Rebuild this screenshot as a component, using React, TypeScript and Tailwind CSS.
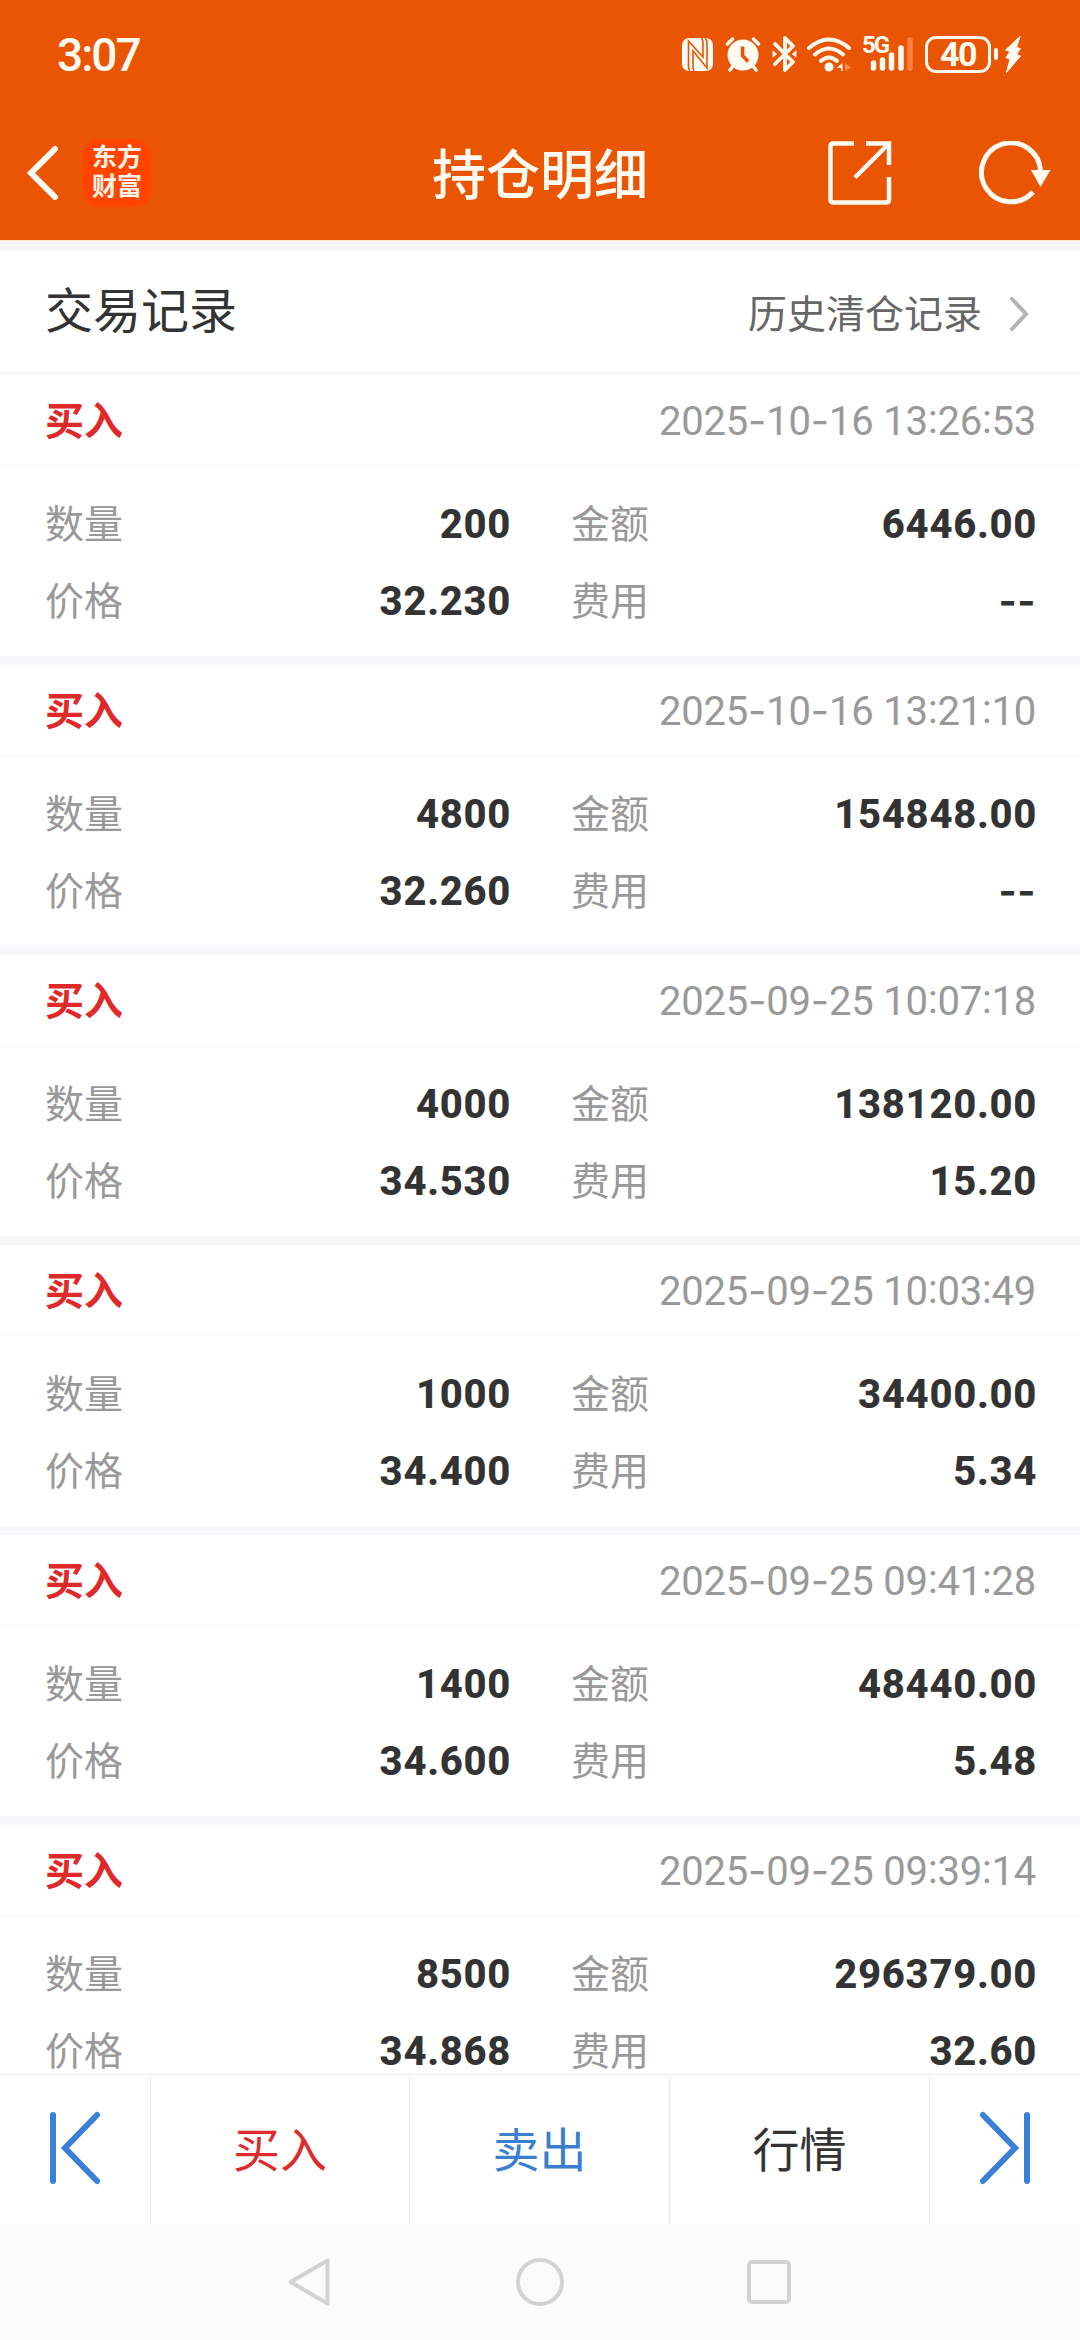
import { Fragment } from 'react'

type Trade = {
  time: string
  count: string
  amount: string
  price: string
  fee: string
}

const trades: Trade[] = [
  { time: '2025-10-16 13:26:53', count: '200', amount: '6446.00', price: '32.230', fee: '--' },
  { time: '2025-10-16 13:21:10', count: '4800', amount: '154848.00', price: '32.260', fee: '--' },
  { time: '2025-09-25 10:07:18', count: '4000', amount: '138120.00', price: '34.530', fee: '15.20' },
  { time: '2025-09-25 10:03:49', count: '1000', amount: '34400.00', price: '34.400', fee: '5.34' },
  { time: '2025-09-25 09:41:28', count: '1400', amount: '48440.00', price: '34.600', fee: '5.48' },
  { time: '2025-09-25 09:39:14', count: '8500', amount: '296379.00', price: '34.868', fee: '32.60' },
]

function StatusBar() {
  return (
    <div className="flex h-[108px] items-center pl-[57px] pr-[58px] font-['Roboto',sans-serif] text-[#fffaf2]">
      <span className="pt-px text-[46px] font-medium leading-none tracking-[-2px]">3:07</span>
      <div className="ml-auto flex items-center">
        {/* NFC */}
        <svg className="mr-3" width="31" height="33" viewBox="0 0 31 33">
          <rect width="31" height="33" rx="7" fill="currentColor" />
          <path d="M8 33Q6 31 6.500 26V3L21 19V5q0-4-1.500-5M23 0q2 2 2 6v24L11 13v15q0 4 1 5" fill="none" stroke="#ea5504" strokeWidth="1.6" />
        </svg>
        {/* alarm */}
        <svg className="mr-[11px]" width="36" height="36" viewBox="0 0 36 36" fill="none" stroke="currentColor" strokeLinecap="round">
          <circle cx="18" cy="19" r="15.5" fill="currentColor" stroke="none" />
          <path d="M2.500 8l5-5M33.500 8l-5-5M8 30l-3 4M28 30l3 4" strokeWidth="3.5" />
          <path d="M17.500 10.500v9l5.500 6" stroke="#ea5504" strokeWidth="3.5" strokeLinecap="butt" />
        </svg>
        {/* bluetooth */}
        <svg className="mr-[10px]" width="25" height="36" viewBox="0 0 25 36" fill="none" stroke="currentColor" strokeWidth="3.8" strokeLinejoin="round" strokeLinecap="round">
          <path d="M3 8l18 18-8 8V2l8 8L3 28" />
          <path d="M1 15l4 3-4 3zM24 15l-4 3 4 3z" fill="currentColor" strokeWidth="0.5" />
        </svg>
        {/* wifi */}
        <svg className="mr-3" width="44" height="35" viewBox="0 0 44 35" fill="none" stroke="currentColor" strokeWidth="4" strokeLinecap="round">
          <path d="M2 11q20-17 40 0M8 17.500q14-12 28 0M14 24q8-7 16 0" />
          <circle cx="22" cy="30" r="4.500" fill="currentColor" stroke="none" />
          <path d="M35.500 26v8H34v-3h-4.500z" fill="currentColor" stroke="none" />
          <path d="M38 26l6 4.500L38 34z" fill="#ff8c52" stroke="none" />
        </svg>
        {/* signal */}
        <div className="relative mr-[12px] h-[36px] w-[50px]">
          <span className="absolute -left-px top-0 text-[24px] font-bold leading-[18px] tracking-[-2px]">5G</span>
          <svg width="50" height="36" viewBox="0 0 50 36" fill="none" stroke="currentColor" strokeWidth="5.5" strokeLinecap="round">
            <path d="M10.500 27v5M19.500 24v8M28.500 19v13M38 12v20" />
            <path d="M47 4v28" stroke="#ff8040" />
          </svg>
        </div>
        {/* battery */}
        <div className="flex h-[37px] w-[66px] items-center justify-center rounded-[11px] border-[3px] border-[#fffaf2]">
          <span className="text-[34px] font-bold leading-none tracking-[-1.5px]">40</span>
        </div>
        <div className="ml-[3px] mr-[7px] h-3 w-[4px] rounded-full bg-[#fffaf2]" />
        <svg width="17" height="37" viewBox="0 0 17 37" fill="currentColor" stroke="currentColor" strokeLinejoin="round">
          <path d="M15 .5L.5 14 5 15.500 1 21.500 5 23 1.500 36.500 15.500 20l-4-1.500 4-6-4-1z" />
        </svg>
      </div>
    </div>
  )
}

function Header() {
  return (
    <header className="h-[241px] border-b border-[#fde7cf] bg-[#ea5504]">
      <StatusBar />
      <div className="relative flex h-[130px] items-center pl-[23px] pr-[28px]">
        <svg width="36" height="56" viewBox="0 0 36 56" fill="none" stroke="#fffaf2" strokeWidth="6" strokeLinecap="round" strokeLinejoin="miter">
          <path d="M32 4L8 28l24 24" />
        </svg>
        <div className="ml-[24px] flex h-[68px] w-[68px] flex-col items-center justify-center rounded-[16px] bg-[#ff4400] pb-[2px] text-[25px] font-bold leading-[29px] text-[#fff3ea]">
          <span>东方</span>
          <span>财富</span>
        </div>
        <h1 className="pointer-events-none absolute inset-x-0 pt-[6px] text-center text-[54px] font-medium leading-none text-[#fffaf2]">
          持仓明细
        </h1>
        <svg className="ml-auto" width="64" height="64" viewBox="0 0 64 64" fill="none" stroke="#fffaf2" strokeWidth="4.5">
          <path d="M26 2.500H5.500q-3 0-3 3v53q0 3 3 3H58q3 0 3-3V36M38 2.500h23V24M60 3.500L27 36.500" />
        </svg>
        <svg className="ml-[87px]" width="73" height="64" viewBox="0 0 73 64">
          <path d="M54 51A29.500 29.500 0 1 1 61.500 30" fill="none" stroke="#fffaf2" strokeWidth="5" />
          <path d="M52 29h19.500l-10 17z" fill="#fffaf2" />
        </svg>
      </div>
    </header>
  )
}

// Roboto's hyphen is too short next to its digits, so dashes are set in Inter
function Timestamp({ value }: { value: string }) {
  return (
    <span className="-mr-px pt-px font-['Roboto',sans-serif] text-[40px] tracking-[-0.2px] text-[#999999]">
      {value.split(/([-:])/).map((part, i) => (
        <Fragment key={i}>
          {part === '-' && <span className="font-['Inter',sans-serif]">-</span>}
          {part === ':' && <span className="align-[2px]">:</span>}
          {part !== '-' && part !== ':' && part}
        </Fragment>
      ))}
    </span>
  )
}

function Field({ label, value }: { label: string; value: string }) {
  return (
    <div className="flex h-[77px] items-center justify-between">
      <span className="text-[#999999]">{label}</span>
      {value === '--' ? (
        <span className="-mr-px font-bold tracking-[0.5px] text-[#333333]">{value}</span>
      ) : (
        <span className="-mr-[2px] pt-[3px] font-['Roboto',sans-serif] text-[40px] font-extrabold tracking-[0.7px] text-[#333333]">{value}</span>
      )}
    </div>
  )
}

function TradeCard({ trade }: { trade: Trade }) {
  return (
    <section className="h-[290px] shrink-0 border-b-[9px] border-[#f6f7f9] text-[39px] leading-none">
      <div className="flex h-[91px] items-center justify-between border-b border-[#f6f7f8] px-[45px]">
        <span className="font-bold text-[#e02a2a]">买入</span>
        <Timestamp value={trade.time} />
      </div>
      <div className="grid grid-cols-[464px_464px] justify-between px-[45px] pt-[19px]">
        <Field label="数量" value={trade.count} />
        <Field label="金额" value={trade.amount} />
        <Field label="价格" value={trade.price} />
        <Field label="费用" value={trade.fee} />
      </div>
    </section>
  )
}

function BottomBar() {
  return (
    <div className="grid h-[150px] grid-cols-[151px_259px_260px_260px_150px] divide-x divide-[#ebebeb] border-t border-[#ebebeb] bg-white text-[47px] leading-none">
      <button className="flex items-center pb-[3px] pl-[48px]">
        <svg width="54" height="74" viewBox="0 0 54 74" fill="none" stroke="#3b80d8" strokeWidth="6" strokeLinecap="round">
          <path d="M5 4v66M49 4L17 37l32 33" />
        </svg>
      </button>
      <button className="text-[#dc2c2c]">买入</button>
      <button className="text-[#3b80d0]">卖出</button>
      <button className="text-[#333333]">行情</button>
      <button className="flex items-center pb-[3px] pl-[49px]">
        <svg width="54" height="74" viewBox="0 0 54 74" fill="none" stroke="#3b80d8" strokeWidth="6" strokeLinecap="round">
          <path d="M48 4v66M4 4l32 33L4 70" />
        </svg>
      </button>
    </div>
  )
}

function NavBar() {
  return (
    <nav className="flex h-[116px] items-center bg-[#fbfbfb] pl-[287px]">
      <svg width="44" height="50" viewBox="0 0 44 50" fill="none" stroke="#d2d2d2" strokeWidth="4" strokeLinejoin="round">
        <path d="M40.500 3.500v43L3.500 25z" />
      </svg>
      <div className="ml-[185px] h-12 w-12 rounded-full border-4 border-[#d2d2d2]" />
      <div className="ml-[183px] h-[44px] w-[44px] rounded-[5px] border-4 border-[#d2d2d2]" />
    </nav>
  )
}

export default function App() {
  return (
    <div className="flex h-[2340px] w-[1080px] flex-col overflow-hidden bg-white font-['Inter','Noto_Sans_CJK_SC',sans-serif]">
      <Header />
      <main className="flex min-h-0 flex-1 flex-col overflow-hidden">
        <div className="flex h-[134px] shrink-0 items-center justify-between border-t-[10px] border-b-4 border-t-[#f6f7f9] border-b-[#f8f9fa] pl-[45px] pr-[50px] leading-none">
          <h2 className="text-[48px] text-[#333333]">交易记录</h2>
          <div className="flex items-center pt-[5px] text-[39px] text-[#666666]">
            历史清仓记录
            <svg className="ml-[26px]" width="22" height="36" viewBox="0 0 22 36" fill="none" stroke="#b3b3b3" strokeWidth="4" strokeLinecap="round">
              <path d="M4 3l14 15L4 33" />
            </svg>
          </div>
        </div>
        {trades.map((trade) => (
          <TradeCard key={trade.time} trade={trade} />
        ))}
      </main>
      <BottomBar />
      <NavBar />
    </div>
  )
}
